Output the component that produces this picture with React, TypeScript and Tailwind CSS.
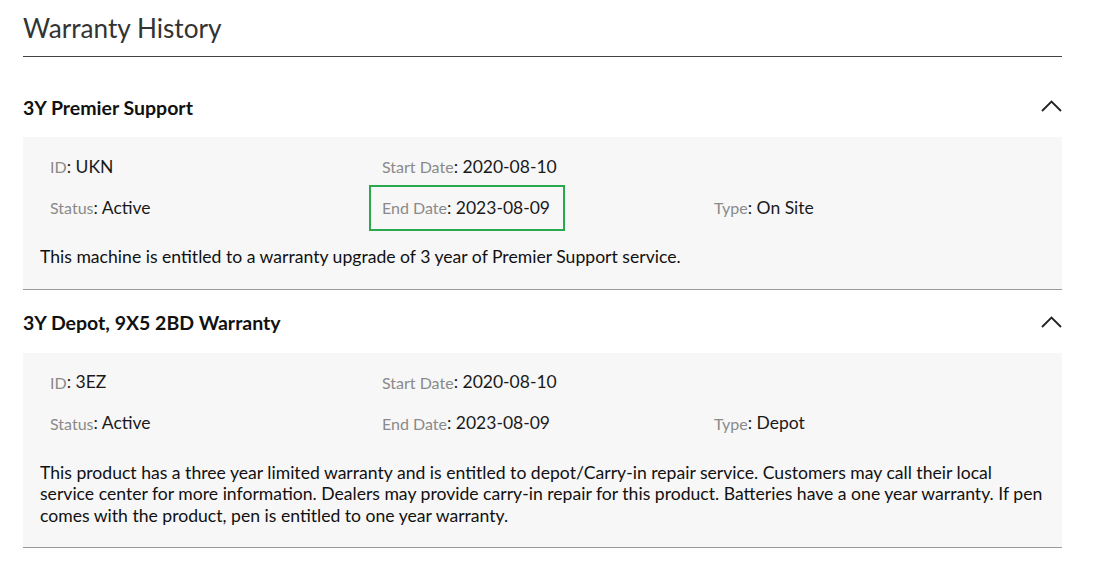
import React from 'react'

type Warranty = {
  name: string
  id: string
  status: string
  start: string
  end: string
  type: string
  description: string
  highlightEnd?: boolean
}

const warranties: Warranty[] = [
  {
    name: '3Y Premier Support',
    id: 'UKN',
    status: 'Active',
    start: '2020-08-10',
    end: '2023-08-09',
    type: 'On Site',
    description: 'This machine is entitled to a warranty upgrade of 3 year of Premier Support service.',
    highlightEnd: true,
  },
  {
    name: '3Y Depot, 9X5 2BD Warranty',
    id: '3EZ',
    status: 'Active',
    start: '2020-08-10',
    end: '2023-08-09',
    type: 'Depot',
    description:
      'This product has a three year limited warranty and is entitled to depot/Carry-in repair service. Customers may call their local service center for more information. Dealers may provide carry-in repair for this product. Batteries have a one year warranty. If pen comes with the product, pen is entitled to one year warranty.',
  },
]

const Chevron = () => (
  <svg width="21" height="13" viewBox="0 0 21 13" fill="none" className="mt-[-4px]">
    <polyline points="1,12 10.5,2.5 20,12" stroke="#222" strokeWidth="1.8" />
  </svg>
)

const Field = ({ label, value, boxed }: { label: string, value: string, boxed?: boolean }) => (
  <div className={`flex items-center w-fit whitespace-nowrap h-[46px] pl-[11px] pr-[13px] border-2 ${boxed ? 'border-[#2aa94c]' : 'border-transparent'}`}>
    <span className="text-[16px] text-[#8a8a8a]">{label}</span>
    <span className="text-[17.5px] text-[#1a1a1a]">:&nbsp;{value}</span>
  </div>
)

const WarrantyItem = ({ w }: { w: Warranty }) => (
  <div>
    <div className="flex items-center justify-between h-[63px] pt-[4px]">
      <h2 className="text-[19.5px] font-bold text-[#111]">{w.name}</h2>
      <Chevron />
    </div>
    <div className="bg-[#f7f7f7] border-b border-[#9a9a9a] pl-[14px] pr-[14px] pt-[7px] pb-[21px]">
      <div className="grid grid-cols-[332px_332px_332px]">
        <Field label="ID" value={w.id} />
        <Field label="Start Date" value={w.start} />
        <div />
        <div className="-mt-[5px]">
          <Field label="Status" value={w.status} />
        </div>
        <div className="-mt-[5px]">
          <Field label="End Date" value={w.end} boxed={w.highlightEnd} />
        </div>
        <div className="-mt-[5px]">
          <Field label="Type" value={w.type} />
        </div>
      </div>
      <p className="pl-[3px] pt-[15px] text-[17.6px] leading-[21.5px] text-[#111]">{w.description}</p>
    </div>
  </div>
)

export default function App() {
  return (
    <div className="bg-white min-h-screen pl-[23px] pr-[31px]" style={{ fontFamily: 'Lato, "Noto Sans", sans-serif' }}>
      <h1 className="text-[26.2px] text-[#333] pt-[11px] pb-[11px] leading-[34px] border-b border-[#444]">
        Warranty History
      </h1>
      <div className="mt-[17px]">
        {warranties.map((w) => (
          <WarrantyItem key={w.name} w={w} />
        ))}
      </div>
    </div>
  )
}
